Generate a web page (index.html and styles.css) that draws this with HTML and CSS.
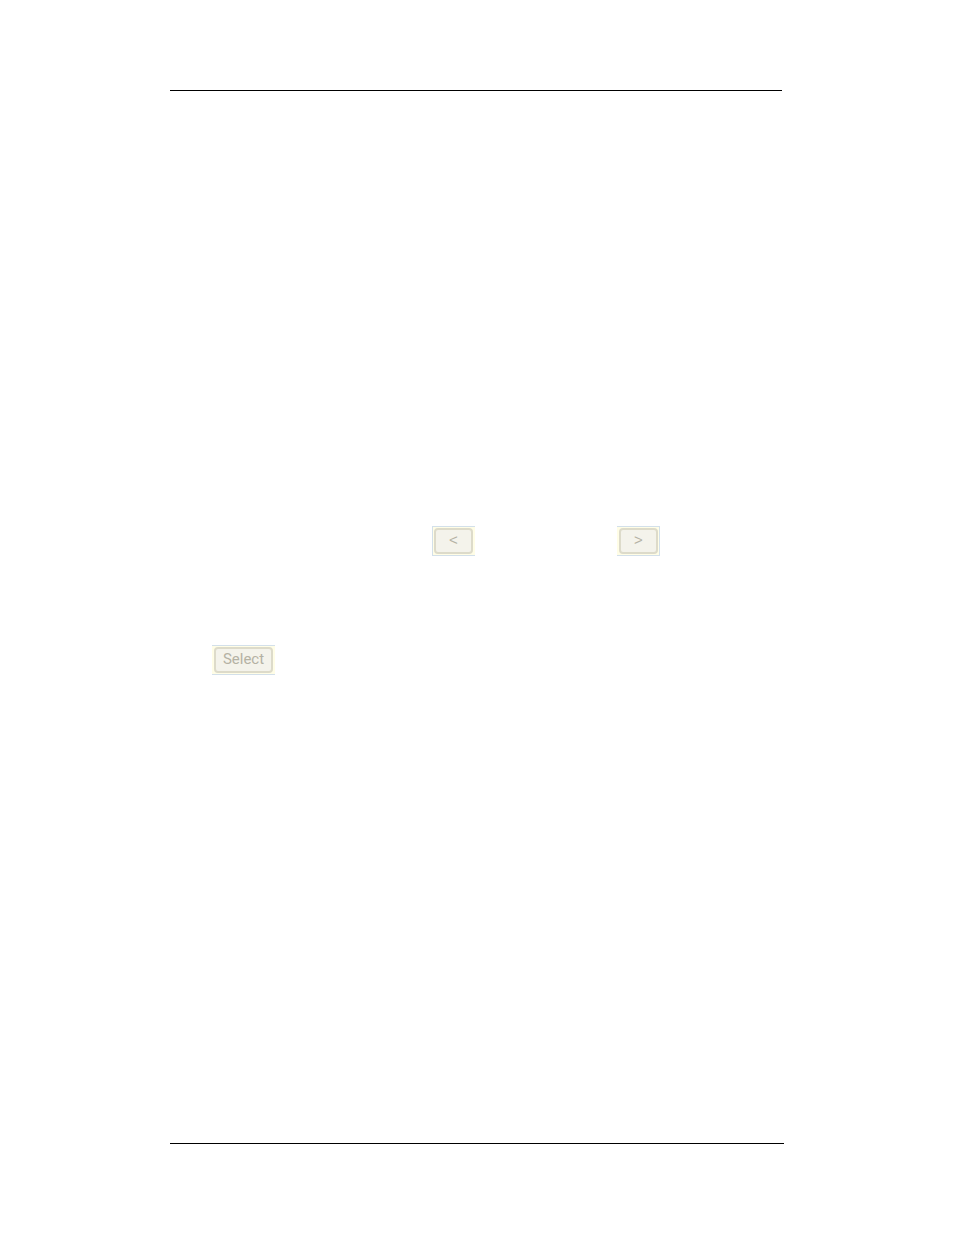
FILE: index.html
```
<!DOCTYPE html>
<html lang="en">
<head>
  <meta charset="UTF-8" />
  <meta name="viewport" content="width=device-width, initial-scale=1.0" />
  <title>Select</title>
  <link rel="stylesheet" href="styles.css">
</head>
<body>
  <div class="page">
    <header class="page-header"></header>

    <main class="content">
      <div class="nav-row">
        <div class="frame frame-left">
          <button type="button" class="btn" disabled>&lt;</button>
        </div>
        <div class="frame frame-right">
          <button type="button" class="btn" disabled>&gt;</button>
        </div>
      </div>

      <div class="select-row">
        <div class="frame">
          <button type="button" class="btn btn-select" disabled>Select</button>
        </div>
      </div>
    </main>

    <footer class="page-footer"></footer>
  </div>
</body>
</html>
```

FILE: styles.css
```
* {
  box-sizing: border-box;
}

body {
  font-family: "Liberation Sans", Arial, sans-serif;
  background-color: #fff;
  margin: 0;
}

.page {
  display: flex;
  flex-direction: column;
  min-height: 100vh;
  padding: 90px 170px 91px;
}

.page-header {
  margin-right: 2px;
  border-top: 1px solid #000;
}

.content {
  flex: 1;
  padding: 435px 0 40px;
}

.page-footer {
  border-top: 1px solid #000;
}

.nav-row {
  display: flex;
  gap: 142px;
  padding-left: 262px;
}

.select-row {
  display: flex;
  margin-top: 89px;
  padding-left: 42px;
}

.frame {
  display: flex;
  padding: 1px 2px;
  background-color: #fffde6;
  border: solid #d3e0ea;
  border-width: 1px 0;
}

.frame-left {
  padding-left: 1px;
  border-left-width: 1px;
}

.frame-right {
  padding-right: 1px;
  border-right-width: 1px;
}

.btn {
  width: 39px;
  height: 26px;
  padding: 0 0 2px;
  font-family: inherit;
  font-size: 15px;
  line-height: 20px;
  color: #b4b2a4;
  background-color: #f4f3eb;
  border: 2px solid #dddbca;
  border-radius: 4px;
}

.btn-select {
  width: 59px;
  font-family: Roboto, Arial, sans-serif;
}
```
